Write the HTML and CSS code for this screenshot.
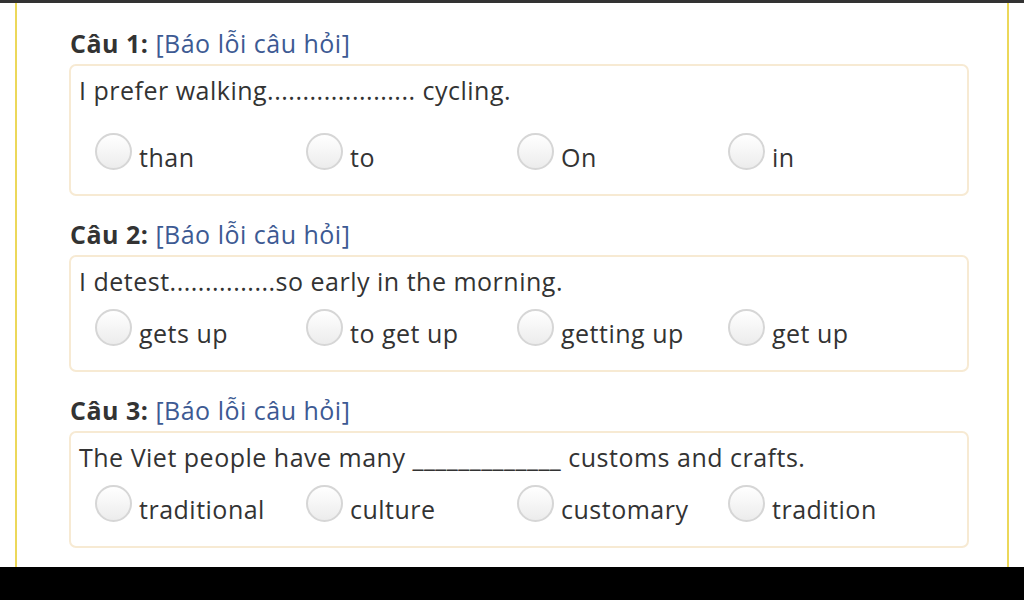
FILE: index.html
```html
<!DOCTYPE html>
<html lang="vi">
<head>
    <meta charset="UTF-8">
    <title>Bài tập trắc nghiệm</title>
    <meta name="viewport" content="width=device-width, initial-scale=1.0">
    <link rel="stylesheet" href="styles.css">
</head>
<body>
    <div class="topbar"></div>
    <div class="quiz">

        <div class="question">
            <h3 class="q-title">Câu 1: <a href="#">[Báo lỗi câu hỏi]</a></h3>
            <div class="q-box">
                <div class="q-text">I prefer walking..................... cycling.</div>
                <div class="answers spaced">
                    <label class="answer"><input type="radio" name="q1"><span>than</span></label>
                    <label class="answer"><input type="radio" name="q1"><span>to</span></label>
                    <label class="answer"><input type="radio" name="q1"><span>On</span></label>
                    <label class="answer"><input type="radio" name="q1"><span>in</span></label>
                </div>
            </div>
        </div>

        <div class="question">
            <h3 class="q-title">Câu 2: <a href="#">[Báo lỗi câu hỏi]</a></h3>
            <div class="q-box">
                <div class="q-text">I detest...............so early in the morning.</div>
                <div class="answers">
                    <label class="answer"><input type="radio" name="q2"><span>gets up</span></label>
                    <label class="answer"><input type="radio" name="q2"><span>to get up</span></label>
                    <label class="answer"><input type="radio" name="q2"><span>getting up</span></label>
                    <label class="answer"><input type="radio" name="q2"><span>get up</span></label>
                </div>
            </div>
        </div>

        <div class="question">
            <h3 class="q-title">Câu 3: <a href="#">[Báo lỗi câu hỏi]</a></h3>
            <div class="q-box">
                <div class="q-text">The Viet people have many _____________ customs and crafts.</div>
                <div class="answers">
                    <label class="answer"><input type="radio" name="q3"><span>traditional</span></label>
                    <label class="answer"><input type="radio" name="q3"><span>culture</span></label>
                    <label class="answer"><input type="radio" name="q3"><span>customary</span></label>
                    <label class="answer"><input type="radio" name="q3"><span>tradition</span></label>
                </div>
            </div>
        </div>

    </div>
    <div class="bottombar"></div>
</body>
</html>
```

FILE: styles.css
```css
body {
    margin: 0;
    padding: 0;
    background-color: #fff;
    font-family: "Open Sans", "Noto Sans", sans-serif;
    font-variant-ligatures: none;
    letter-spacing: 0.5px;
    color: #333;
}

.topbar {
    height: 3px;
    background-color: #333;
}

/* рамка с жёлтыми боковыми линиями */
.quiz {
    margin: 0 15px;
    height: 564px;
    box-sizing: border-box;
    border-left: 2px solid #ecd85a;
    border-right: 2px solid #ecd85a;
    padding: 23px 36px 0 52px;
    overflow: hidden;
}

.question {
    margin-bottom: 21px;
}

.q-title {
    margin: 0 0 4px 1px;
    font-size: 25px;
    line-height: 34px;
    font-weight: bold;
    color: #333;
}

.q-title a {
    font-weight: normal;
    color: #3d5a93;
    text-decoration: none;
}

.q-box {
    width: 900px;
    box-sizing: border-box;
    border: 2px solid #f7ead3;
    border-radius: 7px;
    padding: 4px 8px 17px 8px;
}

.q-text {
    font-size: 25px;
    line-height: 40px;
}

.answers {
    display: flex;
    padding-left: 16px;
    margin-top: 8px;
}

.answers.spaced {
    margin-top: 23px;
}

.answer {
    display: flex;
    align-items: flex-start;
    width: 211px;
    font-size: 25px;
    line-height: 40px;
    cursor: pointer;
}

.answer span {
    padding-top: 4px;
}

.answer input {
    -webkit-appearance: none;
    appearance: none;
    width: 37px;
    height: 37px;
    margin: 0 7px 0 0;
    border: 2px solid #d6d6d6;
    border-radius: 50%;
    background: linear-gradient(#fff, #ececec);
    box-sizing: border-box;
    flex-shrink: 0;
}

.bottombar {
    height: 33px;
    background-color: #000;
}
```
